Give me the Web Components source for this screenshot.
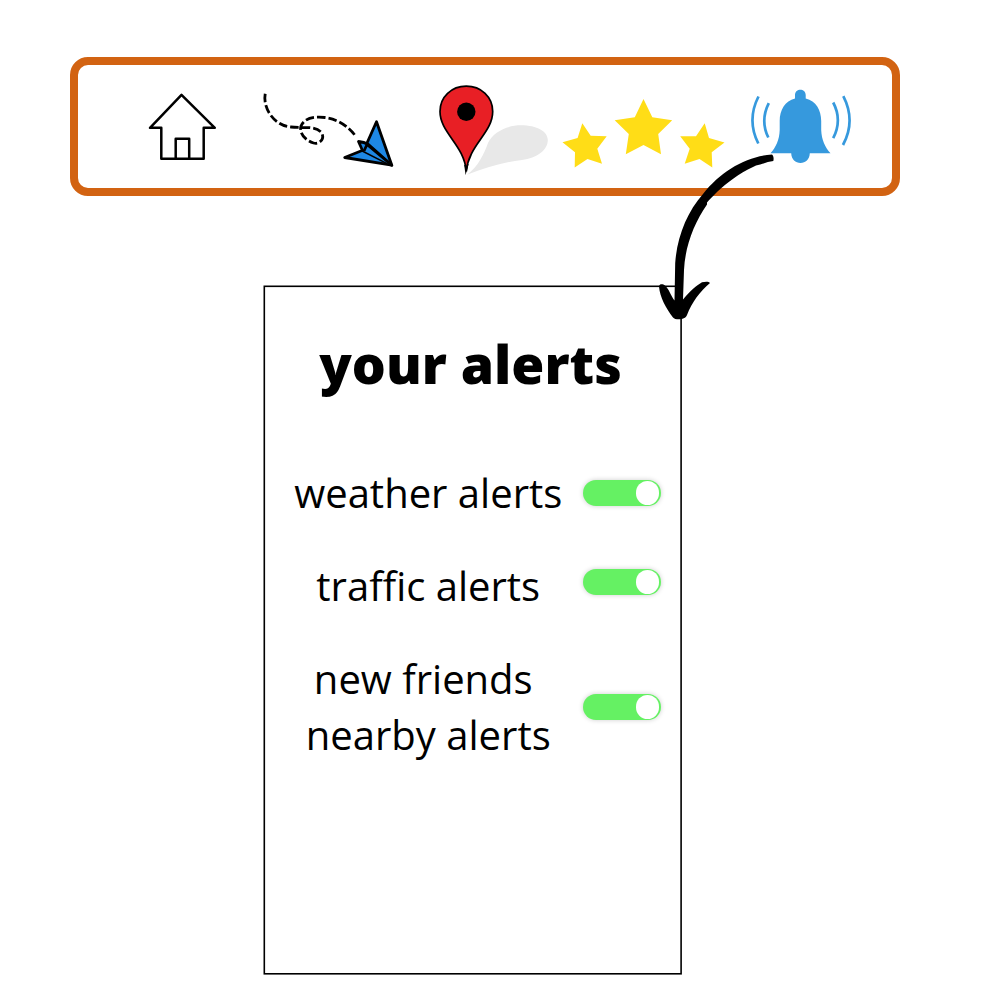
<!DOCTYPE html>
<html lang="en">
<head>
<meta charset="utf-8">
<title>your alerts</title>
<style>
html, body { margin: 0; background: #fff; }
body { width: 1000px; height: 1000px; overflow: hidden; font-family: "Open Sans", "Noto Sans", sans-serif; color: #000; }
</style>
</head>
<body>
<alerts-page></alerts-page>
<script>
const define = (name, html) => {
  const t = document.createElement('template');
  t.innerHTML = html;
  customElements.define(name, class extends HTMLElement {
    constructor() {
      super();
      this.attachShadow({ mode: 'open' }).append(t.content.cloneNode(true));
    }
  });
};

const base = '<style>:host{display:block;flex:none}svg{display:block;overflow:visible}</style>';

define('home-icon', base + `
<svg width="70" height="94" viewBox="148 84 70 94" fill="none" stroke="#000" stroke-width="2.500" stroke-linejoin="round" stroke-linecap="round">
<path d="M181.500 94.800 150 127.800H161.300V158.800H203.700V127.800H214.800ZM175.700 158V138.800H189.200V158"/></svg>`);

define('plane-icon', base + `
<svg width="134" height="94" viewBox="262 84 134 94" fill="none" stroke="#000" stroke-width="2.800">
<path stroke-dasharray="8.500 3" d="M265.200 93.800C262.500 109 275 126 291 127C302 128 315 125.500 321.500 132.500C325 138 320 145 313.500 143C305 140.500 299 133 301 126C305 117 316 116.500 325 117.500C338 119 349 127 355.500 136"/>
<g fill="#1e88e5" stroke-linejoin="round"><path d="M376.500 121.800 391.800 165.200 344.700 157.500 364 149.800Z"/><path d="M391.800 165.200 362.500 150.500 358.500 141.500Q364 142 368.500 144.500Z"/><path d="M391.800 165.200 367 144.500 364 151"/></g></svg>`);

define('pin-icon', base + `
<svg width="112" height="94" viewBox="438 84 112 94">
<path fill="#e8e8e8" d="M467 174.700C478 167 484 154 488 143C493 132 507 125.300 521 125.300C537 125.300 547.800 131.500 547.800 140C547.800 150 537 158 522 160C503 162 485 168 467 174.700Z"/>
<path d="M464.200 165 465.600 175 468.600 164Z"/>
<path fill="#e81f25" stroke="#000" stroke-width="1.700" d="M466.300 171.500C464.500 145 440 133 440 111.500C440 97 451.500 86.200 466.300 86.200S492.700 97 492.700 111.500C492.700 133 468.500 145 466.300 171.500Z"/>
<circle cx="466.300" cy="111.700" r="9.200"/></svg>`);

define('stars-icon', base + `
<svg width="165" height="94" viewBox="561 84 165 94" fill="#ffdd17">
<path d="M643.500 99 652.300 117.200 672.200 120.300 658.200 134 661 154.300 643.500 145 625.800 154.300 628.800 134 614.700 120.300 634.800 117.200Z"/>
<path d="M582.300 123.300 590.700 135.700 606.700 136.300 597.300 148.700 602 163.800 587.500 159 574.700 167.400 575 152.300 562.500 142.300 577.600 138Z"/>
<path d="M704.700 123.300 709 138 724.500 142.500 711.700 152.300 712.300 167.400 699.500 159 684.700 163.800 689.700 148.700 680.200 136.300 696 136.300Z"/></svg>`);

define('bell-icon', base + `
<svg width="104" height="94" viewBox="748 84 104 94">
<path fill="#3699dd" d="M795 98.500V95C795 87.900 805.700 87.900 805.700 95V98.500C816 101 821.200 110 821.200 121V130C821.600 140 825 147 830.500 153.300H809.800C809.500 159.500 805.500 163 800.500 163S791.500 159.500 791.200 153.300H770.500C776 147 779.400 140 779.700 130V121C779.700 110 785 101 795 98.500Z"/>
<path fill="none" stroke="#3699dd" stroke-width="2.700" d="M758.500 96.500Q746.500 120 758.300 143.500M768.800 103.200Q760 120.500 768.300 137.500M833.200 102.500Q842.500 120 833.200 138.200M843.300 96.200Q856 121 843 145"/></svg>`);

define('icon-bar', `
<style>:host{display:flex;box-sizing:border-box;width:830px;height:139px;margin:57px 0 0 70px;border:8px solid #d26312;border-radius:18px;padding:19px 0 0 70px;align-items:flex-start}
::slotted(plane-icon){margin-left:44px}::slotted(pin-icon){margin-left:42px}::slotted(stars-icon){margin-left:11px}::slotted(bell-icon){margin-left:22px}</style>
<slot></slot>`);

define('toggle-switch', `
<style>:host{display:flex;flex:none;box-sizing:border-box;width:78.500px;height:26px;border-radius:13px;background:#65f163;box-shadow:0 0 5px rgba(0,0,0,.2);justify-content:flex-end;align-items:center;padding-right:2px}
i{width:23.500px;height:23.500px;border-radius:50%;background:#fff}</style><i></i>`);

define('alert-row', `
<style>:host{display:flex;align-items:center;font-size:40px;line-height:56px;height:var(--h,56px);margin-top:var(--gap,37px)}
.label{width:318.500px;text-align:center;white-space:nowrap;flex:none}
toggle-switch{margin-top:var(--dy,0px)}</style>
<div class="label"><slot></slot></div><toggle-switch></toggle-switch>`);

define('alerts-panel', `
<style>:host{display:block;box-sizing:border-box;width:418px;height:689px;margin:90px 0 0 264px;position:relative}
.frame{position:absolute;left:0;top:0;overflow:visible}
h1{margin:0;font-size:53.500px;line-height:74px;font-weight:800;text-align:center;padding:41px 5px 0 0;white-space:nowrap}
.rows{padding-top:27px}</style>
<svg class="frame" width="418" height="689"><rect x=".3" y=".3" width="416.800" height="687.500" fill="none" stroke="#000" stroke-width="1.600"/></svg>
<h1><slot name="title"></slot></h1><div class="rows"><slot></slot></div>`);

define('pointer-arrow', `
<style>:host{position:absolute;left:640px;top:145px}svg{display:block}</style>
<svg width="150" height="185" viewBox="640 145 150 185">
<path d="M772 154.600C773.500 156 774 158.500 773.300 161C768 161.500 763 164 756 165.500L753 167C739 173.500 727 182.500 717 192C712 197 709 200 707 202.500L707 204.500C694 223 685 247 684 270L683 299.500C690 291 696 286 702 282.300C705 281.500 709 281.300 710 283C700 291.500 692 302 687 315C685.500 320 675.500 320.500 673 317.500C666 308 660 298 659 286.500C659.500 283.500 663 284 665 285.500C669 289 671 296 674.500 300.500L675.200 263C677 237 687 212 703 194C721 171 747 156 772 154.600Z"/></svg>`);

define('alerts-page', `
<style>:host{display:flex;flex-direction:column;align-items:flex-start;width:1000px;height:1000px;position:relative;background:#fff}
alert-row span{display:block}</style>
<icon-bar><home-icon></home-icon><plane-icon></plane-icon><pin-icon></pin-icon><stars-icon></stars-icon><bell-icon></bell-icon></icon-bar>
<alerts-panel>
<span slot="title">your alerts</span>
<alert-row style="--dy:0px"><span style="padding-left:10px">weather alerts</span></alert-row>
<alert-row style="--dy:-8px"><span style="padding-left:10px">traffic alerts</span></alert-row>
<alert-row style="--h:112px;--dy:0px"><span>new friends</span><span style="padding-left:10px">nearby alerts</span></alert-row>
</alerts-panel>
<pointer-arrow></pointer-arrow>`);
</script>
</body>
</html>
